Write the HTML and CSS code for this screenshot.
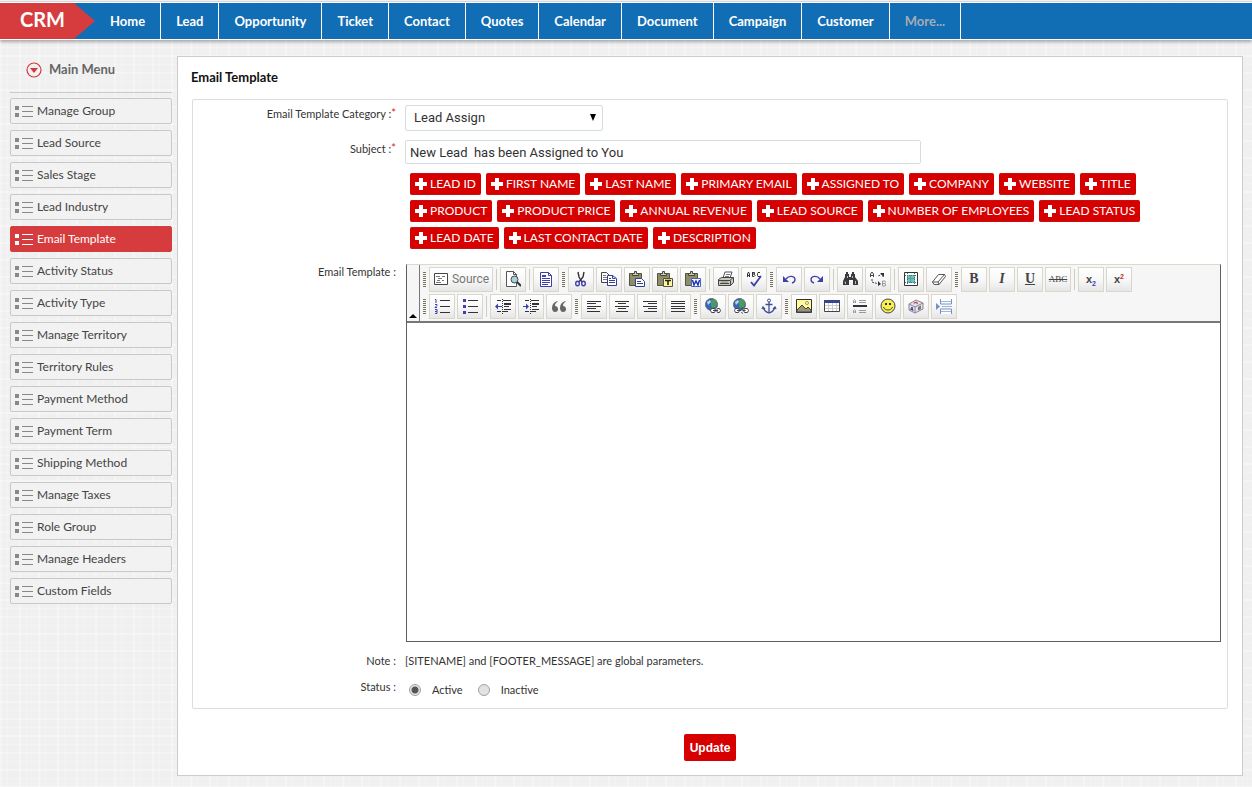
FILE: index.html
```html
<!DOCTYPE html>
<html lang="en">
<head>
<meta charset="utf-8">
<title>CRM - Email Template</title>
<link rel="stylesheet" href="styles.css">
</head>
<body>
<svg class="sprite" aria-hidden="true">
  <symbol id="i-list" viewBox="0 0 18 12"><path d="M0 1h4v4H0zM0 8h4v4H0z" fill="currentColor"/><path d="M7 1.500h11M7 6.500h11M7 11.500h11" stroke="currentColor"/></symbol>
  <symbol id="i-plus" viewBox="0 0 12 12"><path d="M4 0h4v4h4v4H8v4H4V8H0V4h4z" fill="currentColor"/></symbol>
  <symbol id="i-source" viewBox="0 0 16 16"><path d="M1.500 2.500h13v11h-13z" fill="#fff" stroke="#444"/><path d="M3 5.500h4M9 5.500h3M5 7.500h4M4 9.500h3M9 9.500h2M3 11.500h5" stroke="#777"/></symbol>
  <symbol id="i-preview" viewBox="0 0 16 16"><path d="M1.500.500h7l3 3v12h-10z" fill="#fff" stroke="#555"/><path d="M8.500.500v3h3" fill="none" stroke="#555"/><circle cx="9.500" cy="8.500" r="3.500" fill="#a5d6c8" stroke="#446"/><path d="M12 11l4 4" stroke="#333" stroke-width="2"/></symbol>
  <symbol id="i-template" viewBox="0 0 16 16"><path d="M2.500 1.500h8l3 3v11h-11z" fill="#fff" stroke="#3f3f9f"/><path d="M10.500 1.500v3h3" fill="none" stroke="#3f3f9f"/><path d="M4 4h4v2H4z" fill="#3f3fb0"/><path d="M4 7.500h8M4 9.500h8M4 11.500h8M4 13.500h6" stroke="#3f3fb0"/></symbol>
  <symbol id="i-cut" viewBox="0 0 16 16"><path d="M5 1l1 5 3 5M11 1l-1 5-4 5" fill="none" stroke="#333" stroke-width="1.400"/><ellipse cx="4.500" cy="12.500" rx="1.800" ry="2.300" fill="none" stroke="#3f3fb0" stroke-width="1.400"/><ellipse cx="10.500" cy="12.500" rx="1.800" ry="2.300" fill="none" stroke="#3f3fb0" stroke-width="1.400"/></symbol>
  <symbol id="i-copy" viewBox="0 0 16 16"><path d="M.500 1.500h5l3 3v7h-8z" fill="#fff" stroke="#444"/><path d="M2 4.500h3M2 6.500h4M2 8.500h4" stroke="#777"/><path d="M6.500 4.500h5l4 3v7h-9z" fill="#fff" stroke="#334090"/><path d="M11.500 4.500v3h3M8 7.500h2M8 9.500h6M8 11.500h6" fill="none" stroke="#334090"/></symbol>
  <symbol id="i-board" viewBox="0 0 16 16"><path d="M.500 2.500h12v12H.500z" fill="#8d8d68" stroke="#55553f"/><path d="M3.500 4.500v-2h2v-2h2v2h2v2z" fill="#cfcfa8" stroke="#444"/></symbol>
  <symbol id="i-paste" viewBox="0 0 16 16"><use href="#i-board"/><path d="M6.500 7.500h6l3 3v5h-9z" fill="#fff" stroke="#334090"/><path d="M8 10.500h4M8 12.500h6" stroke="#334090"/></symbol>
  <symbol id="i-pastetext" viewBox="0 0 16 16"><use href="#i-board"/><path d="M6.500 7.500h9v8h-9z" fill="#fff59a" stroke="#55553f"/><path d="M8 9.500h6M11 9v5" stroke="#222" stroke-width="1.600"/></symbol>
  <symbol id="i-pasteword" viewBox="0 0 16 16"><use href="#i-board"/><path d="M6.500 7.500h9v8h-9z" fill="#fff" stroke="#4a62c4"/><path d="M7.500 9l1.500 5 2-4 2 4 1.500-5" fill="none" stroke="#2038b0" stroke-width="1.500"/></symbol>
  <symbol id="i-print" viewBox="0 0 16 16"><path d="M5 7l2-6h7l-2 6z" fill="#fff" stroke="#555"/><path d="M8 3.500h4M7 5.500h4" stroke="#777"/><path d="M.500 8.500l3-2h12v5l-3 3H.500z" fill="#c8c8c0" stroke="#444"/><path d="M1 9.500h11l3-3M12.500 9.500v5M2 12.500h9" fill="none" stroke="#444"/><path d="M3 11h7" stroke="#6a9a6a"/></symbol>
  <symbol id="i-spell" viewBox="0 0 16 16"><path d="M1.500 6V3l1-2 1 2v3M2 4.500h2M6.500 1v4.500H8l1-1-1-1.500H6.500M8 3l1-1-1-.500H6.500M14 1.500h-2l-.500 1v2l.500 1h2" fill="none" stroke="#333"/><path d="M5 11l3 3.500L15 5" fill="none" stroke="#3f3fa8" stroke-width="1.800"/></symbol>
  <symbol id="i-undo" viewBox="0 0 16 16"><path d="M5 8c3-4 9-3 9 .500 0 2-1 3-3 3.500" fill="none" stroke="#3f3fa8" stroke-width="1.300"/><path d="M2 5v6h6z" fill="#3f3fa8"/></symbol>
  <symbol id="i-redo" viewBox="0 0 16 16"><path d="M11 8C8 4 2 5 2 8.500c0 2 1 3 3 3.500" fill="none" stroke="#3f3fa8" stroke-width="1.300"/><path d="M14 5v6H8z" fill="#3f3fa8"/></symbol>
  <symbol id="i-find" viewBox="0 0 16 16"><path d="M4 1h2v2h1v3h2V3h1V1h2v2h1v3l3 4v4h-5V9H7v5H1v-4l2-4V3h1z" fill="#3a3a3a"/><path d="M2.500 11h1v2M5.500 5v2M10.500 5v2M13.500 10v3" fill="none" stroke="#bbb"/></symbol>
  <symbol id="i-replace" viewBox="0 0 16 16"><path d="M.500 6V3l1.500-2 1.500 2v3M1 4.500h2" fill="none" stroke="#444"/><path d="M12.500 10v5H15l1-1-1-1.500h-2.500M15 12.500l1-1L15 10h-2.500" fill="none" stroke="#999"/><path d="M2 8v3l5 1.500M13 6V3L8 5" fill="none" stroke="#444" stroke-dasharray="2 1"/><path d="M8 10l3 3-3 2zM10 2h4v4z" fill="#333"/></symbol>
  <symbol id="i-selectall" viewBox="0 0 16 16"><path d="M1.500 1.500h13v13h-13z" fill="#fff" stroke="#333"/><path d="M4 4h8v8H4z" fill="#70c4bc"/><path d="M4.500 2v12M11.500 2v12M2 4.500h12M2 11.500h12" stroke="#387878" stroke-dasharray="1 1"/><path d="M7.500 4v8M4 7.500h8" stroke="#4ea49c"/></symbol>
  <symbol id="i-eraser" viewBox="0 0 16 16"><path d="M1.500 11l6-7.500h6l1 2-6.500 8H3z" fill="#fff" stroke="#555"/><path d="M1.500 11h5.500l6.500-7.500M7 11l1 2.500" fill="none" stroke="#555"/></symbol>
  <symbol id="i-ol" viewBox="0 0 16 16"><path d="M6 2.500h10M6 8.500h10M6 14.500h10" stroke="#333"/><path d="M1 1.500h1V5M1 6.500h2v1L1 9.500h2M1 11.500h2v4H1M1 13.500h2" fill="none" stroke="#3f3fb0"/></symbol>
  <symbol id="i-ul" viewBox="0 0 16 16"><path d="M6 2.500h10M6 8.500h10M6 14.500h10" stroke="#333"/><path d="M1 1h3v3H1zM1 7h3v3H1zM1 13h3v3H1z" fill="#3f3fb0"/></symbol>
  <symbol id="i-outdent" viewBox="0 0 16 16"><path d="M2 2.500h4M8 2.500h8M9 5.500h7M9 8.500h5M9 11.500h7M2 13.500h4M8 13.500h5M9 6.500h7" stroke="#333"/><path d="M7.500 1v15" stroke="#333" stroke-dasharray="1 1"/><path d="M2 8.500h5" stroke="#3f3fb0"/><path d="M0 8.500l3-3v6z" fill="#3f3fb0"/></symbol>
  <symbol id="i-indent" viewBox="0 0 16 16"><path d="M2 2.500h4M8 2.500h8M9 5.500h7M9 8.500h5M9 11.500h7M2 13.500h4M8 13.500h5M9 6.500h7" stroke="#333"/><path d="M7.500 1v15" stroke="#333" stroke-dasharray="1 1"/><path d="M0 8.500h4" stroke="#3f3fb0"/><path d="M6 8.500L3 5.500v6z" fill="#3f3fb0"/></symbol>
  <symbol id="i-quote" viewBox="0 0 16 16"><path d="M6.500 3C3 4 1 6.500 1 10c0 2 1 4 3 4s3-1 3-3-1.500-3-3-3c0-2 1-3.500 2.500-4zM14.500 3C11 4 9 6.500 9 10c0 2 1 4 3 4s3-1 3-3-1.500-3-3-3c0-2 1-3.500 2.500-4z" fill="#666"/></symbol>
  <symbol id="i-left" viewBox="0 0 16 16"><path d="M1 3.500h14M1 5.500h9M1 8.500h14M1 10.500h9M1 13.500h13" stroke="#333"/></symbol>
  <symbol id="i-center" viewBox="0 0 16 16"><path d="M1 3.500h14M4 5.500h8M1 8.500h14M4 10.500h8M2 13.500h12" stroke="#333"/></symbol>
  <symbol id="i-right" viewBox="0 0 16 16"><path d="M1 3.500h14M6 5.500h9M1 8.500h14M6 10.500h9M2 13.500h13" stroke="#333"/></symbol>
  <symbol id="i-justify" viewBox="0 0 16 16"><path d="M1 3.500h14M1 5.500h14M1 8.500h14M1 10.500h14M1 13.500h14" stroke="#333"/></symbol>
  <symbol id="i-globe" viewBox="0 0 16 16"><circle cx="6.500" cy="6.500" r="6" fill="#3468b8" stroke="#667"/><path d="M6 2l4-1 2 4-1 4-4 1-1-3z" fill="#4c9a5c"/><path d="M2 4l3-2 1 2-3 3z" fill="#b8d4f4"/></symbol>
  <symbol id="i-link" viewBox="0 0 16 16"><use href="#i-globe"/><path d="M6.500 10.500h3l1 2-1 2h-3l-1-2zM12.500 10.500h2l1 2-1 2h-2l-1-2z" fill="#fff" stroke="#444"/><path d="M8 12.500h5" stroke="#444"/></symbol>
  <symbol id="i-unlink" viewBox="0 0 16 16"><use href="#i-globe"/><path d="M2.500 10.500h3l1 2-1 2h-3l-1-2zM11.500 10.500h3l1 2-1 2h-3l-1-2z" fill="#fff" stroke="#444"/><path d="M4 12.500h4M9.500 12.500h3M8.500 11l1-1.500M8.500 14l1 1.500" stroke="#444"/></symbol>
  <symbol id="i-anchor" viewBox="0 0 16 16"><circle cx="8" cy="2.500" r="1.500" fill="none" stroke="#3f4f98"/><path d="M8 4v11M4.500 6.500h7M2 9c1 4 3 5 6 6 3-1 5-2 6-6M1 11l1-2 2 2M15 11l-1-2-2 2" fill="none" stroke="#3f4f98" stroke-width="1.300"/></symbol>
  <symbol id="i-image" viewBox="0 0 16 16"><path d="M.500 1.500h15v13H.500z" fill="#fffb9a" stroke="#333"/><circle cx="11" cy="5" r="1.500" fill="#fff" stroke="#996"/><path d="M1 12l5-5 4 4 2-2 3 3v2H1z" fill="#999578" stroke="#444"/></symbol>
  <symbol id="i-table" viewBox="0 0 16 16"><path d="M.500 2.500h15v11H.500z" fill="#fff" stroke="#444"/><path d="M0 2h16v3H0z" fill="#35458f"/><path d="M1 7.500h14M1 10.500h14M4.500 5v8M8.500 5v8M12.500 5v8" stroke="#ccc"/></symbol>
  <symbol id="i-hr" viewBox="0 0 16 16"><path d="M1 8h14" stroke="#333" stroke-width="2"/><path d="M1.500 5V2.500l1-1 1 1V5M1.500 4h2M1.500 15v-2.500l1-1 1 1V15M1.500 14h2M7 2.500h7M7 4.500h7M7 12.500h7M7 14.500h7" fill="none" stroke="#999"/></symbol>
  <symbol id="i-smiley" viewBox="0 0 16 16"><circle cx="8" cy="8" r="7" fill="#f8f050" stroke="#444"/><path d="M5 5h2v2H5zM9 5h2v2H9z" fill="#333"/><path d="M3.500 9c1 4 8 4 9 0" fill="none" stroke="#444"/></symbol>
  <symbol id="i-char" viewBox="0 0 16 16"><path d="M1 6l7-4 7 3v6l-8 4-6-3z" fill="#e6dfee" stroke="#888"/><path d="M1 6l6 3 8-4M7 9v6" fill="none" stroke="#888"/><path d="M6 5.500c1-2 4-1 3 .500" fill="none" stroke="#b84a4a" stroke-width="1.300"/><path d="M2.500 12l1.500-3 1 4M3 11.500h2" fill="none" stroke="#3f3fb0"/><path d="M10 9v3.500l3-1.500V7.500z" fill="#777"/></symbol>
  <symbol id="i-break" viewBox="0 0 16 16"><path d="M4.500 1v5h11V1M4.500 16v-5h11v5" fill="#fff" stroke="#6f93c4"/><path d="M5 3.500h10M6 8.500h10M5 13.500h10" stroke="#9db6d8"/><path d="M0 5v7l4-3.500z" fill="#6f93c4"/></symbol>
</svg>

<header class="topbar">
  <a class="brand" href="#">CRM</a>
  <nav class="nav" aria-label="Modules">
    <a href="#">Home</a><a href="#">Lead</a><a href="#">Opportunity</a><a href="#">Ticket</a><a href="#">Contact</a><a href="#">Quotes</a><a href="#">Calendar</a><a href="#">Document</a><a href="#">Campaign</a><a href="#">Customer</a><a class="more" href="#">More...</a>
  </nav>
</header>

<div class="page">
  <aside class="sidebar">
    <h2 class="menu-title">
      <svg width="16" height="16" viewBox="0 0 16 16" aria-hidden="true"><circle cx="8" cy="8" r="7" fill="none" stroke="#d23b3d" stroke-width="1.200"/><path d="M4 6h8l-4 5z" fill="#d23b3d"/></svg>
      Main Menu
    </h2>
    <nav class="menu" aria-label="Main Menu">
      <a href="#"><svg><use href="#i-list"/></svg>Manage Group</a>
      <a href="#"><svg><use href="#i-list"/></svg>Lead Source</a>
      <a href="#"><svg><use href="#i-list"/></svg>Sales Stage</a>
      <a href="#"><svg><use href="#i-list"/></svg>Lead Industry</a>
      <a href="#" class="active" aria-current="page"><svg><use href="#i-list"/></svg>Email Template</a>
      <a href="#"><svg><use href="#i-list"/></svg>Activity Status</a>
      <a href="#"><svg><use href="#i-list"/></svg>Activity Type</a>
      <a href="#"><svg><use href="#i-list"/></svg>Manage Territory</a>
      <a href="#"><svg><use href="#i-list"/></svg>Territory Rules</a>
      <a href="#"><svg><use href="#i-list"/></svg>Payment Method</a>
      <a href="#"><svg><use href="#i-list"/></svg>Payment Term</a>
      <a href="#"><svg><use href="#i-list"/></svg>Shipping Method</a>
      <a href="#"><svg><use href="#i-list"/></svg>Manage Taxes</a>
      <a href="#"><svg><use href="#i-list"/></svg>Role Group</a>
      <a href="#"><svg><use href="#i-list"/></svg>Manage Headers</a>
      <a href="#"><svg><use href="#i-list"/></svg>Custom Fields</a>
    </nav>
  </aside>

  <main class="panel">
    <h1 class="title">Email Template</h1>
    <form>
      <div class="fields">
        <div class="row">
          <label class="label required" for="category">Email Template Category :<sup>*</sup></label>
          <div class="select"><select id="category"><option>Lead Assign</option></select><svg width="6" height="7" viewBox="0 0 6 7" aria-hidden="true"><path d="M0 0h6L3 7z"/></svg></div>
        </div>
        <div class="row row-subject">
          <label class="label required" for="subject">Subject :<sup>*</sup></label>
          <div>
            <input class="subject" id="subject" type="text" value="New Lead  has been Assigned to You">
            <div class="tags">
              <button type="button"><svg><use href="#i-plus"/></svg>LEAD ID</button>
              <button type="button"><svg><use href="#i-plus"/></svg>FIRST NAME</button>
              <button type="button"><svg><use href="#i-plus"/></svg>LAST NAME</button>
              <button type="button"><svg><use href="#i-plus"/></svg>PRIMARY EMAIL</button>
              <button type="button"><svg><use href="#i-plus"/></svg>ASSIGNED TO</button>
              <button type="button"><svg><use href="#i-plus"/></svg>COMPANY</button>
              <button type="button"><svg><use href="#i-plus"/></svg>WEBSITE</button>
              <button type="button"><svg><use href="#i-plus"/></svg>TITLE</button>
              <button type="button"><svg><use href="#i-plus"/></svg>PRODUCT</button>
              <button type="button"><svg><use href="#i-plus"/></svg>PRODUCT PRICE</button>
              <button type="button"><svg><use href="#i-plus"/></svg>ANNUAL REVENUE</button>
              <button type="button"><svg><use href="#i-plus"/></svg>LEAD SOURCE</button>
              <button type="button"><svg><use href="#i-plus"/></svg>NUMBER OF EMPLOYEES</button>
              <button type="button"><svg><use href="#i-plus"/></svg>LEAD STATUS</button>
              <button type="button"><svg><use href="#i-plus"/></svg>LEAD DATE</button>
              <button type="button"><svg><use href="#i-plus"/></svg>LAST CONTACT DATE</button>
              <button type="button"><svg><use href="#i-plus"/></svg>DESCRIPTION</button>
            </div>
          </div>
        </div>
        <div class="row row-editor">
          <label class="label" for="body">Email Template :</label>
          <div class="editor">
            <div class="toolbar">
              <button type="button" class="collapse" aria-label="Collapse toolbar"><svg width="8" height="4" viewBox="0 0 8 4"><path d="M0 4h8L4 0z"/></svg></button>
              <div class="tools">
                <div class="toolrow">
                  <i class="grip"></i>
                  <button type="button" class="tool source"><svg><use href="#i-source"/></svg>Source</button>
                  <i class="sep"></i>
                  <button type="button" class="tool" aria-label="Preview"><svg><use href="#i-preview"/></svg></button>
                  <i class="sep"></i>
                  <button type="button" class="tool" aria-label="Templates"><svg><use href="#i-template"/></svg></button>
                  <i class="grip"></i>
                  <button type="button" class="tool" aria-label="Cut"><svg><use href="#i-cut"/></svg></button>
                  <button type="button" class="tool" aria-label="Copy"><svg><use href="#i-copy"/></svg></button>
                  <button type="button" class="tool" aria-label="Paste"><svg><use href="#i-paste"/></svg></button>
                  <button type="button" class="tool" aria-label="Paste as text"><svg><use href="#i-pastetext"/></svg></button>
                  <button type="button" class="tool" aria-label="Paste from Word"><svg><use href="#i-pasteword"/></svg></button>
                  <i class="sep"></i>
                  <button type="button" class="tool" aria-label="Print"><svg><use href="#i-print"/></svg></button>
                  <button type="button" class="tool" aria-label="Check spelling"><svg><use href="#i-spell"/></svg></button>
                  <i class="grip"></i>
                  <button type="button" class="tool" aria-label="Undo"><svg><use href="#i-undo"/></svg></button>
                  <button type="button" class="tool" aria-label="Redo"><svg><use href="#i-redo"/></svg></button>
                  <i class="sep"></i>
                  <button type="button" class="tool" aria-label="Find"><svg><use href="#i-find"/></svg></button>
                  <button type="button" class="tool" aria-label="Replace"><svg><use href="#i-replace"/></svg></button>
                  <i class="sep"></i>
                  <button type="button" class="tool" aria-label="Select all"><svg><use href="#i-selectall"/></svg></button>
                  <button type="button" class="tool" aria-label="Remove format"><svg><use href="#i-eraser"/></svg></button>
                  <i class="grip"></i>
                  <button type="button" class="tool bold" aria-label="Bold">B</button>
                  <button type="button" class="tool italic" aria-label="Italic">I</button>
                  <button type="button" class="tool underline" aria-label="Underline">U</button>
                  <button type="button" class="tool strike" aria-label="Strikethrough">ABC</button>
                  <i class="sep"></i>
                  <button type="button" class="tool script" aria-label="Subscript">x<sub>2</sub></button>
                  <button type="button" class="tool script" aria-label="Superscript">x<sup>2</sup></button>
                </div>
                <div class="toolrow">
                  <i class="grip"></i>
                  <button type="button" class="tool" aria-label="Numbered list"><svg><use href="#i-ol"/></svg></button>
                  <button type="button" class="tool" aria-label="Bulleted list"><svg><use href="#i-ul"/></svg></button>
                  <i class="sep"></i>
                  <button type="button" class="tool" aria-label="Decrease indent"><svg><use href="#i-outdent"/></svg></button>
                  <button type="button" class="tool" aria-label="Increase indent"><svg><use href="#i-indent"/></svg></button>
                  <button type="button" class="tool" aria-label="Block quote"><svg><use href="#i-quote"/></svg></button>
                  <i class="grip"></i>
                  <button type="button" class="tool" aria-label="Align left"><svg><use href="#i-left"/></svg></button>
                  <button type="button" class="tool" aria-label="Center"><svg><use href="#i-center"/></svg></button>
                  <button type="button" class="tool" aria-label="Align right"><svg><use href="#i-right"/></svg></button>
                  <button type="button" class="tool" aria-label="Justify"><svg><use href="#i-justify"/></svg></button>
                  <i class="grip"></i>
                  <button type="button" class="tool" aria-label="Link"><svg><use href="#i-link"/></svg></button>
                  <button type="button" class="tool" aria-label="Unlink"><svg><use href="#i-unlink"/></svg></button>
                  <button type="button" class="tool" aria-label="Anchor"><svg><use href="#i-anchor"/></svg></button>
                  <i class="grip"></i>
                  <button type="button" class="tool" aria-label="Image"><svg><use href="#i-image"/></svg></button>
                  <button type="button" class="tool" aria-label="Table"><svg><use href="#i-table"/></svg></button>
                  <button type="button" class="tool" aria-label="Horizontal line"><svg><use href="#i-hr"/></svg></button>
                  <button type="button" class="tool" aria-label="Smiley"><svg><use href="#i-smiley"/></svg></button>
                  <button type="button" class="tool" aria-label="Special character"><svg><use href="#i-char"/></svg></button>
                  <button type="button" class="tool" aria-label="Page break"><svg><use href="#i-break"/></svg></button>
                </div>
              </div>
            </div>
            <textarea id="body"></textarea>
          </div>
        </div>
        <div class="row row-note">
          <span class="label">Note :</span>
          <p class="note">[SITENAME] and [FOOTER_MESSAGE] are global parameters.</p>
        </div>
        <div class="row row-status">
          <span class="label" id="status">Status :</span>
          <div class="radios" role="radiogroup" aria-labelledby="status">
            <label><input type="radio" name="status" checked>Active</label>
            <label><input type="radio" name="status">Inactive</label>
          </div>
        </div>
      </div>
      <div class="actions"><button type="submit" class="update">Update</button></div>
    </form>
  </main>
</div>
</body>
</html>
```
FILE: styles.css
```css
* { box-sizing: border-box; }

body {
  margin: 0;
  font: 12px/16px Lato, sans-serif;
  color: #333;
  background:
    repeating-linear-gradient(90deg, rgba(255,255,255,.3) 0 2px, transparent 2px 7px, rgba(255,255,255,.2) 7px 8px, transparent 8px 19px),
    repeating-linear-gradient(0deg, rgba(255,255,255,.3) 0 2px, transparent 2px 9px, rgba(255,255,255,.2) 9px 10px, transparent 10px 17px),
    #f0f0f0;
}

a { color: inherit; text-decoration: none; }
button, input, select, textarea { font: inherit; color: inherit; margin: 0; }
.sprite { position: absolute; width: 0; height: 0; }

/* Top bar */
.topbar {
  display: flex;
  margin-top: 2px;
  height: 38px;
  background: #116db4;
  border-top: 1px solid #fff;
  border-bottom: 1px solid #fff;
  box-shadow: 0 -1px 0 #d4d8dc, 0 2px 3px rgba(0,0,0,.3);
}
.brand {
  width: 95px;
  padding-left: 20px;
  background: #d63c3d;
  clip-path: polygon(0 0, 74px 0, 95px 50%, 74px 100%, 0 100%);
  color: #fff;
  font-size: 20px;
  font-weight: 700;
  line-height: 32px;
}
.nav { display: flex; }
.nav a {
  padding: 0 15px;
  border-right: 1px solid #fff;
  color: #fff;
  font-size: 13px;
  font-weight: 700;
  line-height: 37px;
}
.nav .more { color: #a3acb5; }

/* Page columns */
.page { display: flex; align-items: flex-start; gap: 5px; padding: 16px 9px 12px 10px; }
.sidebar { flex: none; width: 162px; }
.menu-title {
  display: flex;
  align-items: center;
  gap: 7px;
  margin: 0 0 5px;
  padding: 5px 0 14px 16px;
  border-bottom: 1px solid #ccc;
  font-size: 13px;
  line-height: 17px;
  color: #666;
}
.menu { display: flex; flex-direction: column; gap: 6px; }
.menu a {
  display: flex;
  align-items: center;
  gap: 4px;
  height: 26px;
  padding-left: 4px;
  border: 1px solid #c8c8c8;
  border-radius: 2px;
  background: #f2f2f2;
  color: #444;
}
.menu svg { width: 18px; height: 12px; color: #888; }
.menu .active { background: #d63c3d; border-color: #d63c3d; color: #fff; }
.menu .active svg { color: #fff; }

/* Main panel */
.panel { flex: 1; min-width: 0; border: 1px solid #ccc; background: #fff; }
.title { margin: 0; padding: 12px 13px 14px; font-size: 13px; line-height: 16px; color: #111; }
.fields { margin: 0 14px; padding: 5px 6px 9px 0; border: 1px solid #ddd; border-radius: 2px; }
.row { display: grid; grid-template-columns: 203px minmax(0, 1fr); column-gap: 9px; }
.label { text-align: right; font-size: 11px; }
.required { padding-top: 1px; }
.label sup { font-size: 11px; line-height: 1px; vertical-align: 1px; color: #d22; }
.row-subject, .row-editor, .row-note { margin-top: 9px; }

.select { position: relative; width: 198px; }
.select select {
  display: block;
  width: 100%;
  height: 26px;
  padding: 0 8px;
  appearance: none;
  border: 1px solid #d5dde0;
  border-radius: 2px;
  background: #fff;
  font: 13px/16px Roboto, Arial, sans-serif;
}
.select svg { position: absolute; right: 7px; top: 9px; }
.subject {
  display: block;
  width: 516px;
  max-width: 100%;
  height: 24px;
  padding: 0 4px;
  border: 1px solid #d5dde0;
  border-radius: 2px;
  font: 13px/16px Roboto, Arial, sans-serif;
}
.tags { display: flex; flex-wrap: wrap; gap: 5px; padding: 9px 0 6px 5px; }
.tags button {
  display: flex;
  align-items: center;
  gap: 3px;
  height: 22px;
  padding: 0 5px;
  border: 1px solid #c9100f;
  border-width: 1px 0;
  border-radius: 2px;
  background: #d60000;
  color: #fff;
}
.tags svg { width: 12px; height: 12px; }

/* Rich text editor */
.editor { margin-left: 1px; border: 1px solid #5f5f5f; border-top: 1px solid #ddd9cd; }
.toolbar { display: flex; background: #f6f6f6; border-bottom: 2px solid #777; }
.collapse {
  display: flex;
  align-items: flex-end;
  justify-content: center;
  width: 13px;
  padding: 0 0 3px;
  border: 0;
  border-right: 1px solid #777;
  background: none;
}
.tools { display: flex; flex-direction: column; gap: 2px; padding: 2px; }
.toolrow { display: flex; align-items: center; gap: 2px; }
.grip { width: 5px; height: 17px; border: solid #f6f6f6; border-width: 1px; background: repeating-linear-gradient(#77735c 0 1px, #f6f6f6 1px 2px); }
.sep { width: 3px; height: 21px; border: solid #f6f6f6; border-width: 0 1px; background: #cfccc0; }
.tool {
  display: flex;
  align-items: center;
  justify-content: center;
  width: 26px;
  height: 25px;
  padding: 0 0 1px;
  border: 1px solid #d9d6cb;
  background: linear-gradient(#fff, #f8f8f8 50%, #e6e6e6);
  color: #444;
}
.tool svg { width: 16px; height: 16px; }
.source { width: 64px; gap: 3px; font: 12px/16px Roboto, Arial, sans-serif; color: #777; }
.bold, .italic, .underline { font: 700 14px/16px "Liberation Serif", serif; }
.italic { font-style: italic; }
.underline { text-decoration: underline; }
.strike { font: 9px/16px "Liberation Serif", serif; text-decoration: line-through; }
.script { font: 700 11px/16px "Liberation Sans", sans-serif; }
.script sub, .script sup { font-size: 7px; line-height: 1px; color: #3f3fb0; }
.script sub { align-self: flex-end; padding-bottom: 6px; }
.script sup { align-self: flex-start; padding-top: 8px; color: #c03030; }
.editor textarea { display: block; width: 100%; height: 318px; padding: 8px; border: 0; resize: none; outline: 0; }

.row-note { line-height: 20px; }
.note { margin: 0; font-size: 11px; }
.row-status { margin-top: 8px; }
.radios { display: flex; gap: 15px; padding: 3px 0 1px 4px; font-size: 11px; }
.radios label { display: flex; align-items: center; gap: 11px; }
.radios input {
  width: 12px;
  height: 12px;
  appearance: none;
  border: 1px solid #a0a0a0;
  border-radius: 50%;
  background: #e2e2e2;
}
.radios input:checked { background: radial-gradient(circle, #555 0 3px, #e6e6e6 4px); }

.actions { display: flex; justify-content: center; padding: 25px 0 14px; }
.update {
  height: 27px;
  padding: 0 6px;
  border: 0;
  border-radius: 2px;
  background: #d60000;
  color: #fff;
  font: 700 12px/16px "Liberation Sans", Arial, sans-serif;
}
```
